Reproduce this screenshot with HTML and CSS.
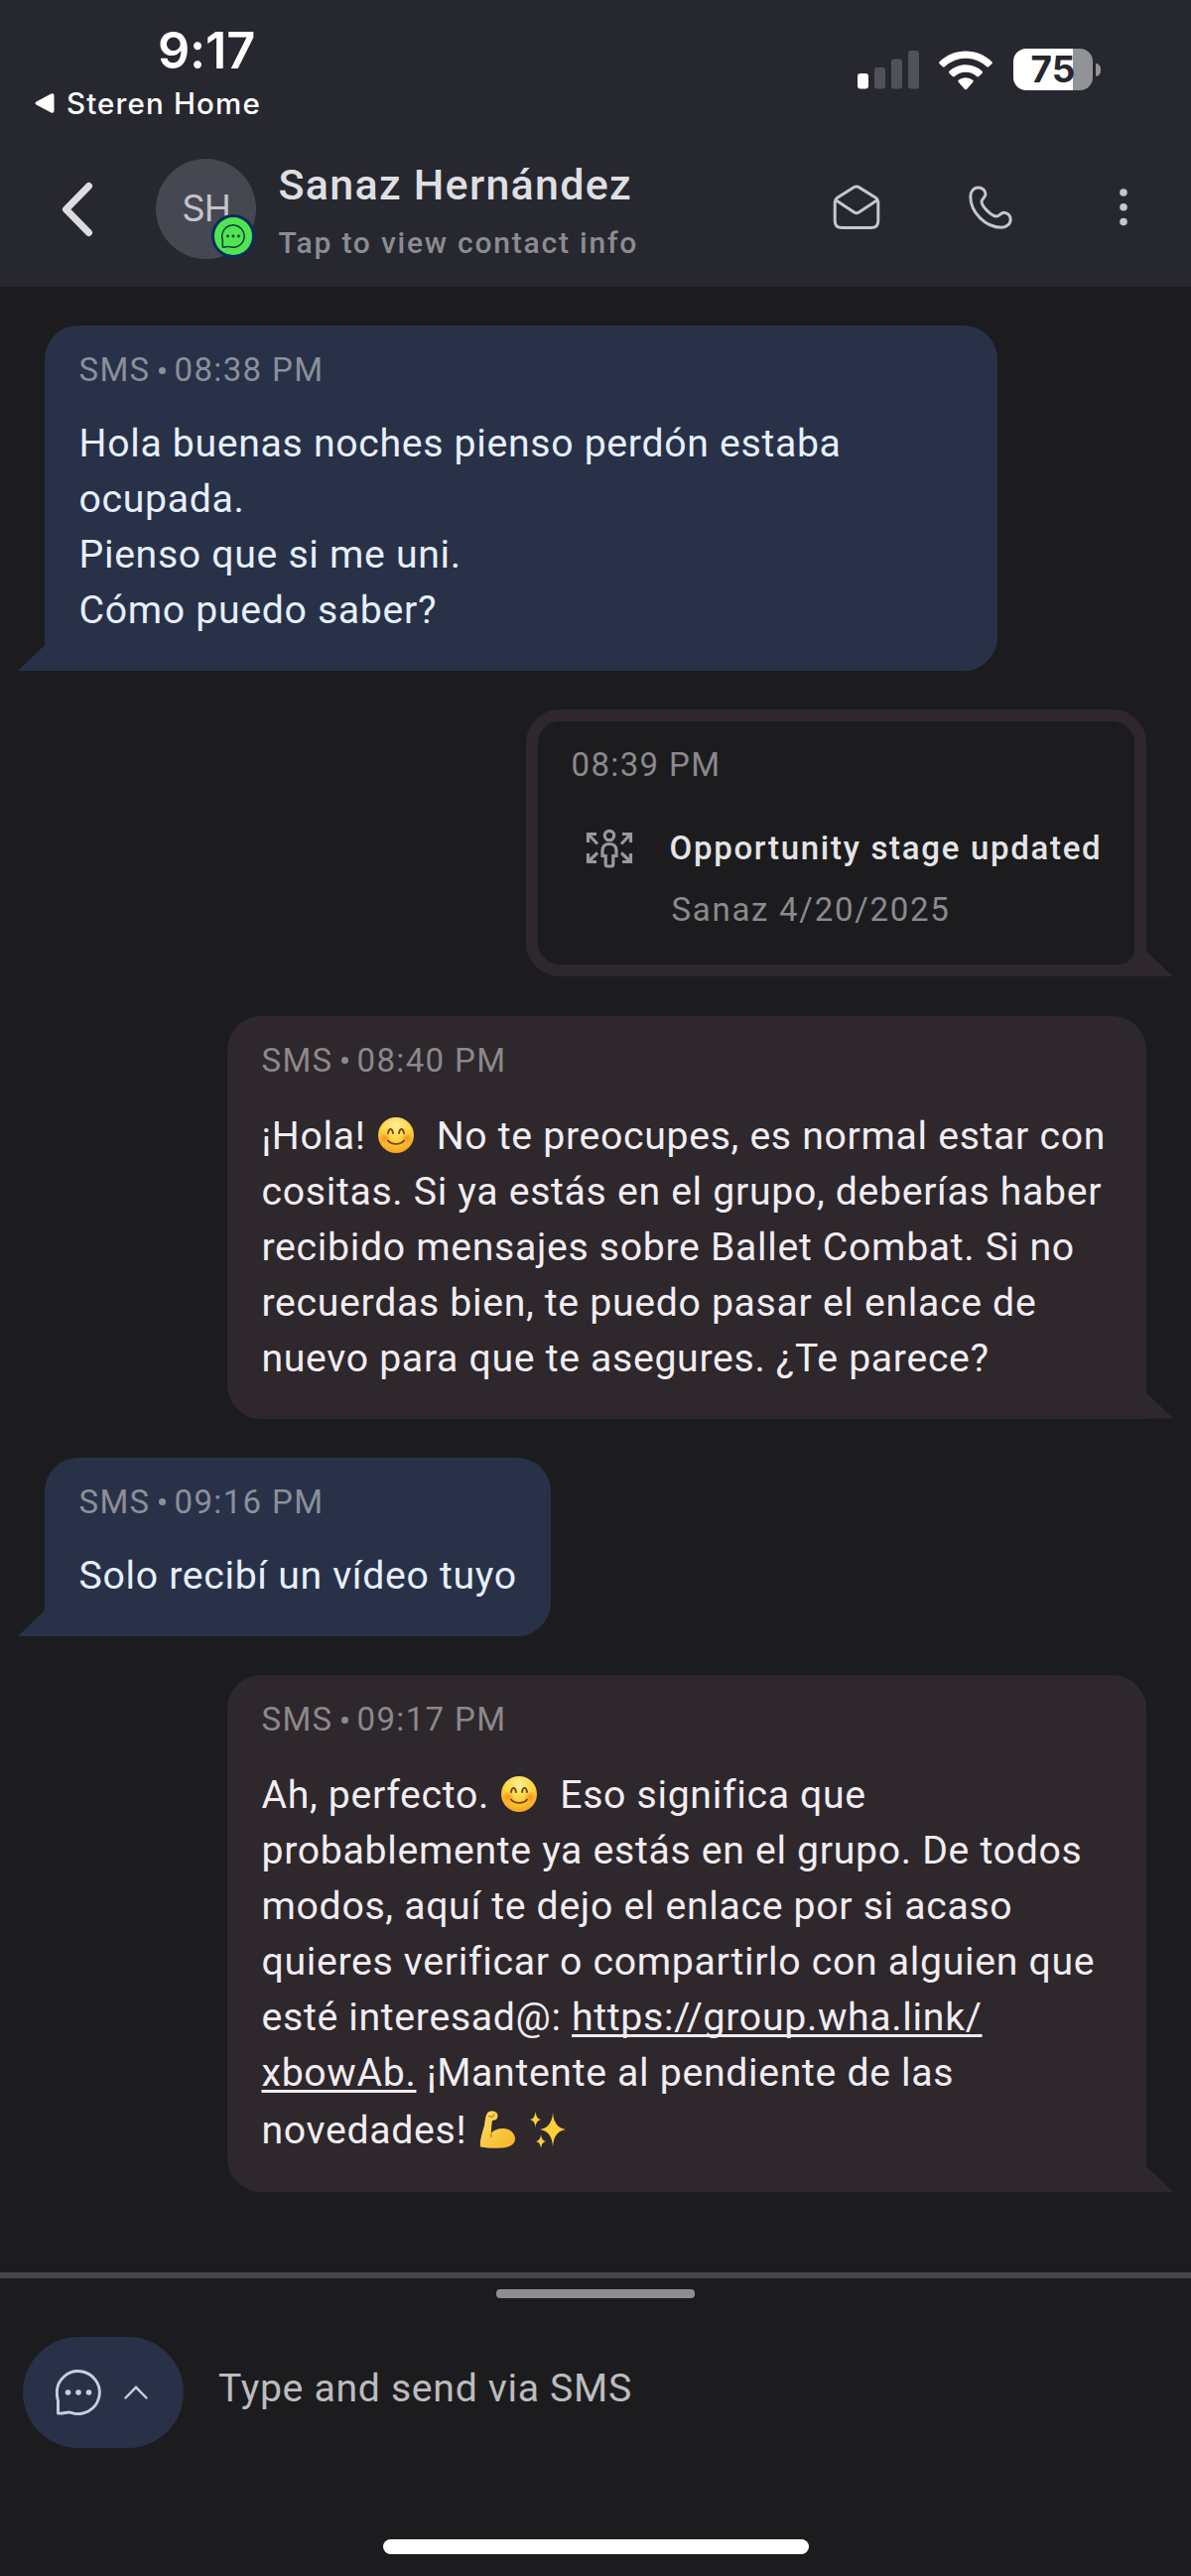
FILE: index.html
```html
<!DOCTYPE html>
<html lang="es">
<head>
<meta charset="utf-8">
<title>Sanaz Hernández</title>
<link rel="stylesheet" href="styles.css">
</head>
<body>
<svg class="defs" aria-hidden="true">
  <defs>
    <radialGradient id="face" cx="50%" cy="25%" r="75%">
      <stop offset="0" stop-color="#fff09a"/><stop offset=".5" stop-color="#ffd640"/><stop offset="1" stop-color="#f5a21d"/>
    </radialGradient>
    <radialGradient id="blush"><stop offset="0" stop-color="#f4741c" stop-opacity=".7"/><stop offset="1" stop-color="#f4741c" stop-opacity="0"/></radialGradient>
    <linearGradient id="arm" x1="0" y1="0" x2="1" y2="1"><stop offset="0" stop-color="#ffdd68"/><stop offset="1" stop-color="#f6b51f"/></linearGradient>
    <symbol id="smile" viewBox="0 0 36 36">
      <circle cx="18" cy="18" r="18" fill="url(#face)"/>
      <circle cx="7" cy="21" r="6" fill="url(#blush)"/><circle cx="29" cy="21" r="6" fill="url(#blush)"/>
      <path d="M10 16c.8-5.500 4.200-5.500 5 0M21 16c.8-5.500 4.200-5.500 5 0M10 23.500c3.500 4.500 12.500 4.500 16 0" fill="none" stroke="#7a4208" stroke-width="1.900" stroke-linecap="round"/>
    </symbol>
    <symbol id="chat" viewBox="0 0 46 46">
      <path d="M2.500 44V31.500C1.500 28.500 1.300 26 1.300 23A21.500 21.500 0 1 1 15.500 43.300C12 42 7.500 45 2.500 44Z" fill="none" stroke="currentColor" stroke-width="2.900" stroke-linejoin="round"/>
      <circle cx="12.500" cy="23" r="2.800" fill="currentColor"/><circle cx="23" cy="23" r="2.800" fill="currentColor"/><circle cx="33.500" cy="23" r="2.800" fill="currentColor"/>
    </symbol>
  </defs>
</svg>
<header class="top">
  <div class="status">
    <div class="status-left">
      <div class="clock">9:17</div>
      <div class="return"><svg width="20" height="20" viewBox="0 0 20 20"><path d="M1.500 8.500 16.500.5Q19.500-.5 19.500 2.500v15q0 3-3 2L1.500 11.500Q-.5 10 1.500 8.500Z" fill="#fff"/></svg><span>Steren Home</span></div>
    </div>
    <div class="status-right">
      <svg width="62" height="40" viewBox="0 0 62 40"><rect y="24" width="11" height="15.500" rx="3" fill="#fff"/><g fill="#515257"><rect x="17" y="18" width="11" height="21.500" rx="3"/><rect x="34" y="9.500" width="11" height="30" rx="3"/><rect x="51" y="1" width="11" height="38.500" rx="3"/></g></svg>
      <svg class="wifi" width="54" height="40" viewBox="0 0 54 40"><path d="M27 0.500C17 .5 7.500 4.500.6 11.200q-1 1 0 2L3.800 16.300q1 .8 2 0a30.500 30.500 0 0 1 42.400 0q1 .8 2 0l3.200-3.100q1-1 0-2C46.500 4.500 37 .5 27 .5Z" fill="#fff"/><path d="M27 14.300c-6.300 0-12.200 2.400-16.600 6.500q-1 1 0 2l3.400 3.300q1 .8 2 0a16.500 16.500 0 0 1 22.400 0q1 .8 2 0l3.400-3.300q1-1 0-2A24.300 24.300 0 0 0 27 14.300Z" fill="#fff"/><path d="M27 27.300c-2.800 0-5.300.9-7.300 2.500q-1 1 0 2l6.300 7.100q1 .9 2 0l6.300-7.100q1-1 0-2A11.700 11.700 0 0 0 27 27.300Z" fill="#fff"/></svg>
      <div class="battery"><span>75</span></div><i class="nub"></i>
    </div>
  </div>
  <div class="bar">
    <svg class="back" width="32" height="56" viewBox="0 0 32 56"><path d="M27.500 4.500 4.500 28 27.500 51.500" fill="none" stroke="#dcdde1" stroke-width="7" stroke-linecap="round" stroke-linejoin="round"/></svg>
    <div class="avatar">SH<span class="badge"><svg width="24" height="24"><use href="#chat"/></svg></span></div>
    <div class="who"><div class="name">Sanaz Hernández</div><div class="hint">Tap to view contact info</div></div>
    <div class="actions">
      <svg width="48" height="46" viewBox="0 0 48 46" fill="none" stroke="#c6c7cd" stroke-width="3" stroke-linejoin="round"><path d="M2.200 17.500Q2.200 15 4.300 13.600L21.700 2.600Q24 1.200 26.300 2.600L43.700 13.600Q45.800 15 45.800 17.500V36.500Q45.800 43.500 38.800 43.500H9.200Q2.200 43.500 2.200 36.500Z"/><path d="M2.800 15.500 21.700 28Q24 29.500 26.300 28L45.200 15.500"/></svg>
      <svg class="phone" width="44" height="44" viewBox="0 0 44 44" fill="none" stroke="#c6c7cd" stroke-width="3" stroke-linejoin="round"><path d="M10 2C5 2 1.800 6 1.800 11 1.800 27 17 42.200 33 42.200c5 0 9.200-3.200 9.200-8.200 0-3.500-3-6.800-6.500-6.800-3.500 0-5 3.800-7.500 3.800C23 31 13 21 13 16c0-2.500 4-4 4-7.500S13.500 2 10 2Z"/></svg>
      <svg class="dots" width="10" height="40" viewBox="0 0 10 40" fill="#c6c7cd"><circle cx="5" cy="5" r="3.800"/><circle cx="5" cy="19.800" r="3.800"/><circle cx="5" cy="34.500" r="3.800"/></svg>
    </div>
  </div>
</header>
<main class="thread">
  <section class="bubble in wide"><div class="meta">SMS<b></b>08:38 PM</div><p>Hola buenas noches pienso perdón estaba<br>ocupada.<br>Pienso que si me uni.<br>Cómo puedo saber?</p></section>
  <section class="bubble out event"><div class="meta">08:39 PM</div>
    <div class="event-row">
      <svg width="48" height="40" viewBox="0 0 48 40" fill="none" stroke="#98989d" stroke-width="3.200"><path d="M2.500 14V5.500h8.500M2.500 5.500l9.500 10M37 5.500h8.500V14M45.500 5.500l-9.500 10M2.500 25v8.500h8.500M2.500 33.500l9.500-9M37 33.500h8.500V25M45.500 33.500l-9.500-9"/><circle cx="24" cy="7" r="4.700"/><path d="M24 15.500c-4.500 0-7 2.500-7 7v5h3.200v8.500q0 2 2 2h3.600q2 0 2-2v-8.500H31v-5c0-4.500-2.500-7-7-7Z"/></svg>
      <div><div class="event-title">Opportunity stage updated</div><div class="event-sub">Sanaz 4/20/2025</div></div>
    </div>
  </section>
  <section class="bubble out solid"><div class="meta">SMS<b></b>08:40 PM</div><p class="tall">¡Hola! <svg class="emoji" role="img" aria-label="😊"><use href="#smile"/></svg>&nbsp; No te preocupes, es normal estar con<br>cositas. Si ya estás en el grupo, deberías haber<br>recibido mensajes sobre Ballet Combat. Si no<br>recuerdas bien, te puedo pasar el enlace de<br>nuevo para que te asegures. ¿Te parece?</p></section>
  <section class="bubble in"><div class="meta">SMS<b></b>09:16 PM</div><p>Solo recibí un vídeo tuyo</p></section>
  <section class="bubble out solid last-bubble"><div class="meta">SMS<b></b>09:17 PM</div><p class="tall">Ah, perfecto. <svg class="emoji" role="img" aria-label="😊"><use href="#smile"/></svg>&nbsp; Eso significa que<br>probablemente ya estás en el grupo. De todos<br>modos, aquí te dejo el enlace por si acaso<br>quieres verificar o compartirlo con alguien que<br>esté interesad@: <a>https://group.wha.link/<br>xbowAb.</a> ¡Mantente al pendiente de las<br><span class="last">novedades! <svg class="emoji" role="img" aria-label="💪" viewBox="0 0 36 38"><path d="M1 36.500C0 30 3 22 5 15 6 9 6 5 8 2.500 9.500.5 13 0 15.500 1c3 1 3.500 4 2.500 6.500-.8 1.800-3 2.500-5 2.500-.7 4-1.200 8-1 12.500C15 19 20 17.500 25 18c7 .7 11 5.500 11 10.500 0 5-5 8.500-12 9C16 38 7 38 1 36.500Z" fill="url(#arm)"/><path d="M12 22.500c-.5 1.500-.3 3 .5 4.500M9 6c2-1 3 1 4 .5s1-3 2.500-2.500" fill="none" stroke="#c98412" stroke-width="1.300"/></svg><svg class="emoji spark" role="img" aria-label="✨" viewBox="0 0 36 38" fill="#ffcf3a"><path d="M23 2q1 15 13 17-12 2-13 17-1-15-13-17 12-2 13-17ZM5.500 1q.5 7 5.500 8-5 1-5.500 8-.5-7-5.500-8 5-1 5.500-8ZM11 24q.5 6 5 7-4.500 1-5 7-.5-6-5-7 4.500-1 5-7Z"/></svg></span></p></section>
</main>
<footer class="composer">
  <i class="handle"></i>
  <div class="compose-row">
    <div class="channel"><svg class="chat-icon" width="46" height="46"><use href="#chat"/></svg><svg width="24" height="14" viewBox="0 0 24 14"><path d="M1.500 12.500 12 1.800 22.500 12.500" fill="none" stroke="#c7d0df" stroke-width="2.400" stroke-linecap="round"/></svg></div>
    <div class="placeholder">Type and send via SMS</div>
  </div>
  <i class="home"></i>
</footer>
</body>
</html>
```
FILE: styles.css
```css
* { box-sizing: border-box; }
body { margin: 0; width: 1200px; height: 2596px; display: flex; flex-direction: column; background: #1c1c1e; font-family: Roboto, sans-serif; color: #eee; overflow: hidden; }
svg { display: block; flex: none; }
.defs { position: absolute; width: 0; height: 0; }

.top { height: 289px; background: #27272f; }
.status { height: 146px; display: flex; justify-content: space-between; padding: 22px 91px 0 35px; color: #fff; font-family: Inter, sans-serif; }
.clock { font-size: 50.500px; line-height: 58px; font-weight: 600; padding-left: 124px; letter-spacing: -.2px; }
.return { display: flex; align-items: center; gap: 12px; font-size: 29.500px; line-height: 36px; font-weight: 500; margin-top: 6px; letter-spacing: 1.150px; }
.status-right { display: flex; align-items: flex-start; padding-top: 28px; }
.wifi { margin: 1px 0 0 20px; }
.battery { margin: -1px 3px 0 21px; width: 80px; height: 42px; border-radius: 13px; background: linear-gradient(90deg, #fff 60px, #929396 60px); color: #27272f; font-size: 37px; line-height: 42px; font-weight: 700; text-align: center; }
.nub { width: 5px; height: 13px; margin-top: 14px; border-radius: 0 5px 5px 0; background: #929396; }

.bar { display: flex; align-items: center; height: 129px; padding: 0 63px 0 62px; }
.avatar { position: relative; width: 101px; height: 101px; margin-left: 63px; border-radius: 50%; background: #454850; color: #c3c4ca; font-family: Inter, sans-serif; font-size: 36.500px; line-height: 101px; text-align: center; font-weight: 400; letter-spacing: -1px; }
.badge { position: absolute; left: 56px; top: 56px; width: 44px; height: 44px; border: 3px solid #0a2c5c; border-radius: 50%; background: #4fe450; color: #0a3a44; display: grid; place-items: center; line-height: 0; }
.who { margin-left: 22.500px; padding-top: 2px; }
.name { font-size: 43px; line-height: 52px; font-weight: 500; color: #dedfe3; letter-spacing: 1.280px; }
.hint { font-size: 30px; line-height: 36px; margin-top: 15px; font-weight: 500; color: #8b8c92; letter-spacing: 1.780px; }
.actions { flex: 1; display: flex; align-items: center; justify-content: flex-end; padding-bottom: 3px; }
.phone { margin-left: 89px; }
.dots { margin-left: 107px; }

.thread { height: 2001px; padding: 39px 45px 0; display: flex; flex-direction: column; gap: 39.300px; }
.bubble { position: relative; flex: none; border-radius: 34px; padding: 25px 34.500px 0; }
.in { align-self: flex-start; background: #283148; border-bottom-left-radius: 0; color: #e6effc; padding-bottom: 33px; }
.wide { width: 960px; }
.out { align-self: flex-end; border-bottom-right-radius: 0; color: #f1edf1; }
.solid { width: 926px; background: #2e272c; padding-bottom: 33px; }
.last-bubble { padding-bottom: 34px; }
.in::before, .out::after { content: ""; position: absolute; bottom: 0; width: 27px; height: 26px; background: #283148; clip-path: polygon(100% 0, 100% 100%, 0 100%); left: -27px; }
.out::after { background: #2e272c; left: auto; right: -27px; clip-path: polygon(0 0, 100% 100%, 0 100%); }
.meta { display: flex; align-items: center; font-size: 33px; line-height: 40px; letter-spacing: 1.350px; color: #8b8f99; }
.out .meta { color: #8c888d; }
.meta b { width: 7px; height: 7px; margin: 0 9px 0 8px; border-radius: 50%; background: currentColor; }
p { margin: 26px 0 0; font-size: 39.200px; line-height: 56px; letter-spacing: .69px; white-space: nowrap; }
.tall { margin-top: 28px; }
.emoji { display: inline-block; width: 36px; height: 38px; vertical-align: 5px; margin: -10px 2px -10px 2px; }
.spark { margin-left: 13px; }
.last { display: block; padding-top: 2px; }
a { text-decoration: underline; text-decoration-thickness: 3px; text-underline-offset: 4px; text-decoration-skip-ink: none; }

.event { width: 625px; height: 269px; padding: 24px 33.500px; border: 12px solid #2e272c; }
.event::before { content: ""; position: absolute; right: 0; bottom: 0; width: 16px; height: 16px; background: radial-gradient(circle at 0 0, transparent 16px, #2e272c 16px); }
.event::after { right: -39px; bottom: -12px; }
.event-row { display: flex; margin-top: 42px; padding-left: 14px; gap: 37px; }
.event-row svg { margin-top: 2px; }
.event-title { font-size: 33px; line-height: 44px; font-weight: 500; color: #e4e4e6; letter-spacing: 1.700px; white-space: nowrap; }
.event-sub { font-size: 33px; line-height: 40px; margin: 20px 0 0 2px; color: #8a8a8f; letter-spacing: 1.720px; }

.composer { flex: 1; border-top: 6px solid #46464c; display: flex; flex-direction: column; align-items: center; }
.handle { width: 200px; height: 9px; margin-top: 11px; border-radius: 4px; background: #8e8e91; }
.compose-row { width: 1200px; margin-top: 39px; padding-left: 23px; display: flex; }
.channel { width: 162px; height: 112px; border-radius: 56px; background: #283148; color: #c7d0df; display: flex; align-items: center; padding-left: 33px; gap: 23px; }
.placeholder { margin: 26px 0 0 35px; font-size: 39.200px; line-height: 52px; color: #bcbcbf; letter-spacing: .680px; }
.home { width: 429px; height: 15px; margin-top: 92px; border-radius: 8px; background: #fff; }
```
